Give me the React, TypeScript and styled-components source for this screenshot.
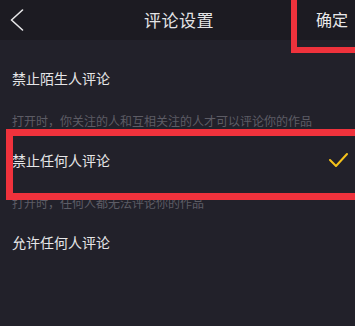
import React from 'react';
import styled, { createGlobalStyle } from 'styled-components';

const GlobalStyle = createGlobalStyle`
    html, body {
        margin: 0;
        padding: 0;
        background: #22212a;
    }
    body {
        font-family: 'Noto Sans CJK SC', 'Noto Sans', sans-serif;
        -webkit-font-smoothing: antialiased;
    }
`

export const Page = styled.div`
    width: 355px;
    height: 326px;
    overflow: hidden;
    background: #22212a;
    display: flex;
    flex-direction: column;
`

export const Header = styled.div`
    position: relative;
    height: 40px;
    flex-shrink: 0;
    background: #1c1b22;
    display: grid;
    grid-template-columns: 1fr auto 1fr;
    align-items: center;
`

export const BackButton = styled.button`
    justify-self: start;
    width: 34px;
    height: 40px;
    padding: 0 0 0 10px;
    border: none;
    background: none;
    display: flex;
    align-items: center;
`

export const Title = styled.div`
    font-size: 17px;
    line-height: 20px;
    color: #e4e4e6;
    letter-spacing: 0.5px;
    padding-left: 3px;
`

export const Confirm = styled.button`
    justify-self: end;
    padding: 0 7px 0 0;
    border: none;
    background: none;
    font-family: inherit;
    font-size: 16px;
    line-height: 20px;
    color: #e8e8ea;
    margin-bottom: 2px;
`

export const Highlight = styled.div<{ $top: number; $left: number; $width: number; $height: number; $border: number }>`
    position: absolute;
    top: ${p => p.$top}px;
    left: ${p => p.$left}px;
    width: ${p => p.$width}px;
    height: ${p => p.$height}px;
    border: ${p => p.$border}px solid #ef323c;
    box-sizing: border-box;
    pointer-events: none;
`

export const List = styled.div`
    display: flex;
    flex-direction: column;
    padding-top: 10px;
`

export const Option = styled.div`
    position: relative;
    height: 56px;
    padding: 0 7px 0 12px;
    display: flex;
    align-items: center;
    justify-content: space-between;
`

export const OptionText = styled.span`
    font-size: 14px;
    line-height: 18px;
    color: #e6e6e8;
`

export const Desc = styled.div`
    height: 26px;
    box-sizing: border-box;
    padding: 7px 0 0 12px;
    font-size: 12px;
    line-height: 16px;
    color: #5d5c65;
`

const Chevron = () => (
    <svg width="14" height="22" viewBox="0 0 14 22">
        <path d="M12.5 1 L1.5 11 L12.5 21" fill="none" stroke="#e8e8ea" strokeWidth="1.6" strokeLinecap="round" strokeLinejoin="round" />
    </svg>
)

const Check = () => (
    <svg width="20" height="16" viewBox="0 0 20 16">
        <path d="M2 8 L8 14 L19 2" fill="none" stroke="#f5c21b" strokeWidth="2" strokeLinecap="round" strokeLinejoin="round" />
    </svg>
)

const App: React.FC = () => {
    return (
        <>
            <GlobalStyle />
            <Page>
                <Header>
                    <BackButton><Chevron /></BackButton>
                    <Title>评论设置</Title>
                    <Confirm>确定</Confirm>
                    <Highlight $top={-10} $left={291} $width={80} $height={63} $border={6} />
                </Header>
                <List>
                    <Option><OptionText>禁止陌生人评论</OptionText></Option>
                    <Desc>打开时，你关注的人和互相关注的人才可以评论你的作品</Desc>
                    <Option>
                        <OptionText>禁止任何人评论</OptionText>
                        <Check />
                        <Highlight $top={-3} $left={6} $width={360} $height={71} $border={7} />
                    </Option>
                    <Desc>打开时，任何人都无法评论你的作品</Desc>
                    <Option><OptionText>允许任何人评论</OptionText></Option>
                </List>
            </Page>
        </>
    );
}

export default App;
